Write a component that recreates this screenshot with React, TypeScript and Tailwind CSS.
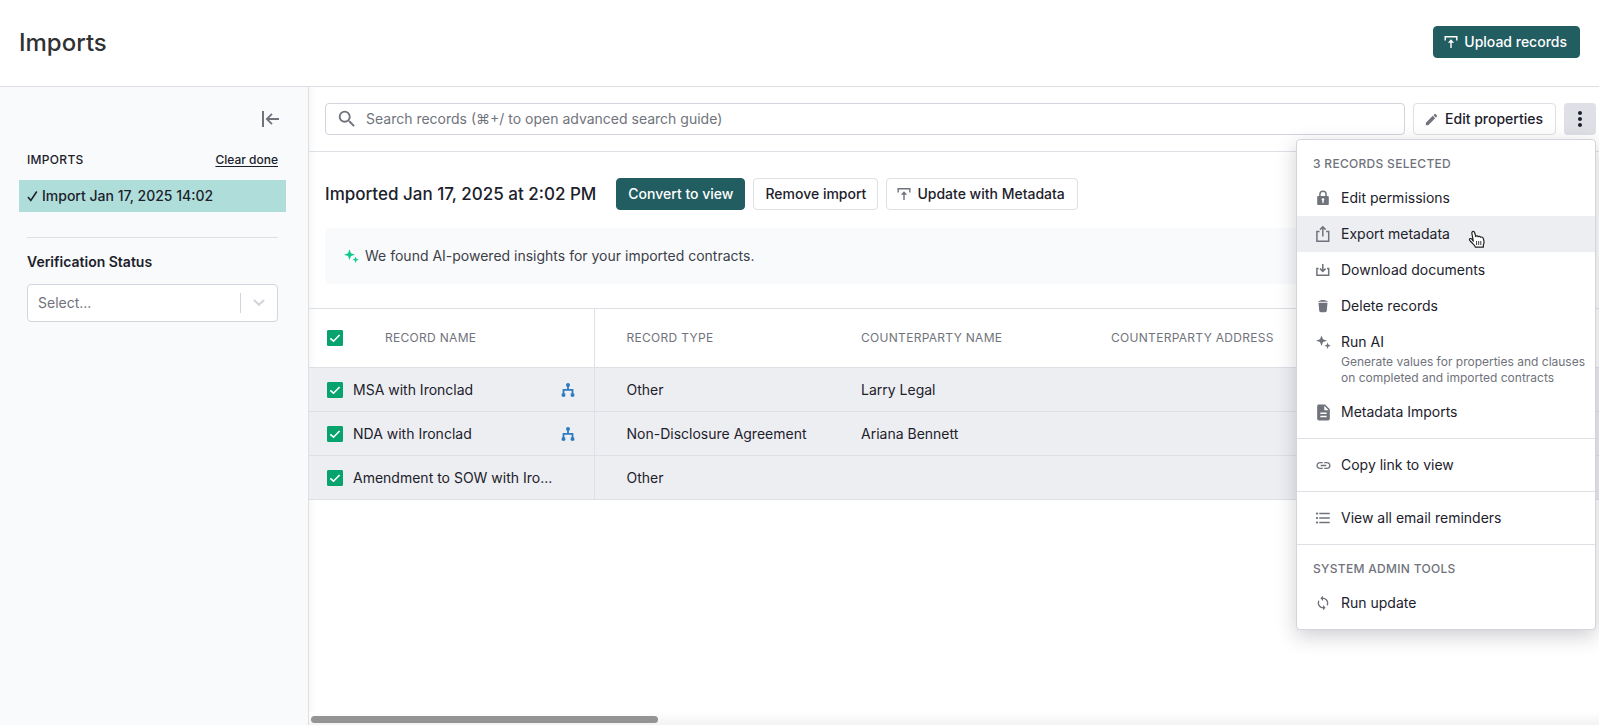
import { useState } from 'react'
import type { ReactNode } from 'react'
import clsx from 'clsx'
import { MdLink, MdEdit, MdSearch, MdDescription, MdMoreVert, MdFormatListBulleted } from 'react-icons/md'

type RecordRow = {
  name: string
  type: string
  counterparty: string
  related: boolean
}

const records: RecordRow[] = [
  { name: 'MSA with Ironclad', type: 'Other', counterparty: 'Larry Legal', related: true },
  { name: 'NDA with Ironclad', type: 'Non-Disclosure Agreement', counterparty: 'Ariana Bennett', related: true },
  { name: 'Amendment to SOW with Iro...', type: 'Other', counterparty: '', related: false },
]

function UploadIcon() {
  return (
    <svg width="14" height="14" viewBox="0 0 14 14" fill="none" stroke="currentColor" strokeWidth="1.4">
      <path d="M1.2 5.6V1.7h11.6v3.9M7 13V6" />
      <path d="M7 4.2 10.1 7.8H3.9z" fill="currentColor" stroke="none" />
    </svg>
  )
}

function ExportIcon() {
  return (
    <svg width="16" height="18" viewBox="0 0 16 18" fill="none" stroke="currentColor" strokeWidth="1.5">
      <path d="M4.5 6.6H1.9v9.7h11.8V6.6h-2.6M7.8 11.5V2M5 4.6l2.8-2.8 2.8 2.8" />
    </svg>
  )
}

function DownloadIcon() {
  return (
    <svg width="16" height="14" viewBox="0 0 16 14" fill="none" stroke="currentColor" strokeWidth="1.5">
      <path d="M3.6 5.6H1.9v6.7h11.8V5.6H12M7.8 1v7M5 5.6l2.8 2.8 2.8-2.8" />
    </svg>
  )
}

function LockIcon() {
  return (
    <svg width="14" height="16" viewBox="0 0 14 16">
      <path d="M3.9 6.5V4.3a3.1 3.1 0 0 1 6.2 0v2.2" fill="none" stroke="currentColor" strokeWidth="1.5" />
      <rect x="1.2" y="6" width="11.6" height="9" rx="1" fill="currentColor" />
      <circle cx="7" cy="9.5" r="1.3" fill="#fff" />
      <path d="M7 9.5V13" stroke="#fff" strokeWidth="1.3" />
    </svg>
  )
}

function TrashIcon() {
  return (
    <svg width="12" height="14" viewBox="0 0 12 14" fill="currentColor">
      <path d="M4 1.2C4.6.9 7.400.9 8 1.200l2 .7c.6.2.9.5.9.9H1.100c0-.4.300-.7.900-.9zM1.500 3.800h9l-.7 7.700c-.1 1-.8 1.700-1.800 1.700H4c-1 0-1.700-.7-1.800-1.700z" />
    </svg>
  )
}

function SparkleIcon() {
  return (
    <svg width="15" height="15" viewBox="0 0 15 15" fill="currentColor">
      <path d="M5.5.5 7 4.3l4 1.4-4 1.4-1.5 4-1.5-4-4-1.4 4-1.4zM11.600 7.600l.9 2.200 2.300.9-2.300.9-.9 2.300-.9-2.300-2.300-.9 2.300-.9z" />
    </svg>
  )
}

function SyncIcon() {
  return (
    <svg width="16" height="16" viewBox="0 0 24 24" fill="currentColor">
      <path d="M12 4V1L8 5l4 4V6c3.31 0 6 2.69 6 6 0 1.01-.25 1.97-.7 2.8l1.46 1.46C19.54 15.03 20 13.57 20 12c0-4.42-3.58-8-8-8zm0 14c-3.31 0-6-2.69-6-6 0-1.01.25-1.97.7-2.8L5.24 7.74C4.46 8.97 4 10.43 4 12c0 4.42 3.58 8 8 8v3l4-4-4-4v3z" />
    </svg>
  )
}

function CollapseIcon() {
  return (
    <svg width="18" height="16" viewBox="0 0 18 16" fill="none" stroke="currentColor">
      <path d="M2 0v16" strokeWidth="2" />
      <path d="M18 8H6M11 2.8 5.8 8l5.2 5.2" strokeWidth="1.8" />
    </svg>
  )
}

function RelatedIcon() {
  return (
    <svg width="14" height="14" viewBox="0 0 14 14" fill="#2f7bbf">
      <circle cx="7" cy="2" r="2" />
      <circle cx="2.5" cy="12" r="2" />
      <circle cx="11.5" cy="12" r="2" />
      <path d="M7 2v4.5M2.5 12V6.8h9V12" fill="none" stroke="#2f7bbf" strokeWidth="1.8" />
    </svg>
  )
}

function HandCursor() {
  return (
    <svg width="18" height="19" viewBox="0 0 18 19" className="pointer-events-none absolute left-[171px] top-[14px]">
      <path
        d="M5.3 11.2 4 4.2C3.6 2.7 4 1.4 5 1.3c1-.1 1.5.6 1.8 1.7L7.7 6.5c.7-.9 2.1-.8 2.5.2.8-.7 2-.5 2.4.5 1.2-.5 2.4.1 2.7 1.3l.7 2.8c.3 1.6-.5 2.6-.6 3.8v2H7.3c-.3-1.7-2.1-2.8-3.4-4.4C2.8 11.3 1 10.400 1.400 9.200c.5-1.200 1.900-.7 2.600.2z"
        fill="#fff"
        stroke="#222"
        strokeWidth="1.2"
        strokeLinejoin="round"
      />
      <path d="M8.6 11v4M10.7 11v4M12.8 11v4" stroke="#222" strokeWidth=".9" />
    </svg>
  )
}

function Checkbox({ label, checked, onChange }: { label: string; checked: boolean; onChange: () => void }) {
  return (
    <span className="grid size-4 shrink-0">
      <input
        type="checkbox"
        aria-label={label}
        checked={checked}
        onChange={onChange}
        className="col-start-1 row-start-1 size-4 appearance-none rounded-[1px] border border-[#c9cbd3] bg-white checked:border-[#06a46c] checked:bg-[#06a46c]"
      />
      {checked && (
        <svg viewBox="0 0 16 16" fill="none" className="pointer-events-none col-start-1 row-start-1 size-4">
          <path d="M3.3 8.3 6.5 11.2 12.6 5" stroke="#fff" strokeWidth="1.6" />
        </svg>
      )}
    </span>
  )
}

function Button({ primary, icon, children }: { primary?: boolean; icon?: ReactNode; children: ReactNode }) {
  return (
    <button
      type="button"
      className={clsx(
        'flex h-8 shrink-0 items-center gap-1.5 whitespace-nowrap rounded border text-sm font-medium cursor-pointer',
        icon ? 'pl-2.5 pr-3' : 'px-[11px]',
        primary ? 'border-[#225d62] bg-[#225d62] text-white' : 'border-[#dfe0e6] bg-white text-[#1c212b]'
      )}
    >
      {icon && <span className={primary ? 'text-white' : 'text-[#70737c]'}>{icon}</span>}
      {children}
    </button>
  )
}

function MenuItem({ icon, label, note, active }: { icon: ReactNode; label: string; note?: string; active?: boolean }) {
  return (
    <button
      type="button"
      role="menuitem"
      className={clsx('relative flex w-full gap-2 py-2 pl-4 pr-1 text-left cursor-pointer', active && 'bg-[#edeef2]')}
    >
      <span className="flex h-5 w-5 shrink-0 items-center justify-center text-[#70737c]">{icon}</span>
      <span className="flex flex-col gap-0.5">
        <span className="text-sm text-[#1c212b]">{label}</span>
        {note && <span className="text-xs text-[#70737c]">{note}</span>}
      </span>
      {active && <HandCursor />}
    </button>
  )
}

function MenuHeading({ children }: { children: ReactNode }) {
  return (
    <div className="px-4 py-2 text-xs font-medium uppercase tracking-wide text-[#70737c]">{children}</div>
  )
}

function ActionsMenu() {
  return (
    <div
      role="menu"
      className="absolute right-0 top-9 z-10 w-[300px] divide-y divide-[#dfe0e6] rounded border border-[#d3d5dc] bg-white shadow-[0_6px_20px_rgba(30,34,50,0.22)]"
    >
      <div className="py-2">
        <MenuHeading>3 records selected</MenuHeading>
        <MenuItem icon={<LockIcon />} label="Edit permissions" />
        <MenuItem icon={<ExportIcon />} label="Export metadata" active />
        <MenuItem icon={<DownloadIcon />} label="Download documents" />
        <MenuItem icon={<TrashIcon />} label="Delete records" />
        <MenuItem
          icon={<SparkleIcon />}
          label="Run AI"
          note="Generate values for properties and clauses on completed and imported contracts"
        />
        <MenuItem icon={<MdDescription size={19} />} label="Metadata Imports" />
      </div>
      <div className="py-2">
        <MenuItem icon={<MdLink size={17} />} label="Copy link to view" />
      </div>
      <div className="py-2">
        <MenuItem icon={<MdFormatListBulleted size={18} />} label="View all email reminders" />
      </div>
      <div className="py-2">
        <MenuHeading>System admin tools</MenuHeading>
        <MenuItem icon={<SyncIcon />} label="Run update" />
      </div>
    </div>
  )
}

function Sidebar() {
  return (
    <aside className="w-[309px] shrink-0 border-r border-[#dfe0e6] bg-[#f9fafc] pl-[19px] pr-[22px] pt-4">
      <div className="flex h-8 items-center justify-end pr-[7px]">
        <button type="button" aria-label="Collapse sidebar" className="text-[#70737c] cursor-pointer">
          <CollapseIcon />
        </button>
      </div>
      <div className="mt-[17px] flex items-center justify-between px-2 text-xs font-medium">
        <h2 className="uppercase tracking-wide">Imports</h2>
        <a href="#clear" className="underline underline-offset-2">
          Clear done
        </a>
      </div>
      <a href="#import" className="mt-3 flex h-8 items-center gap-1 bg-[#afdeda] px-2 text-sm font-medium">
        <svg width="11" height="12" viewBox="0 0 11 12" fill="none" stroke="currentColor" strokeWidth="1.6">
          <path d="M1 7 3.8 10.5 9.8 1.5" />
        </svg>
        Import Jan 17, 2025 14:02
      </a>
      <div className="mx-2 mt-[25px] border-t border-[#dfe0e6] pt-3.5">
        <label htmlFor="status" className="block text-sm font-semibold">
          Verification Status
        </label>
        <div className="mt-3 flex h-[38px] items-center rounded border border-[#d3d5dc] bg-white">
          <select id="status" className="h-full flex-1 appearance-none px-2.5 text-sm text-[#70737c] outline-none">
            <option>Select...</option>
          </select>
          <span className="h-5 w-px bg-[#d3d5dc]" />
          <svg width="12" height="8" viewBox="0 0 12 8" fill="none" className="mx-3">
            <path d="M1.5 1.5 6 5.8l4.5-4.3" stroke="#d3d5dc" strokeWidth="2.2" strokeLinecap="round" />
          </svg>
        </div>
      </div>
    </aside>
  )
}

function RecordsTable() {
  const [selected, setSelected] = useState<boolean[]>(records.map(() => true))
  const all = selected.every(Boolean)

  const headCell = 'pl-8 text-left text-xs font-normal uppercase tracking-wide text-[#70737c]'
  const cell = 'truncate pl-8'

  return (
    <table className="w-full table-fixed border-y border-[#dfe0e6] text-sm">
      <colgroup>
        <col className="w-[285px]" />
        <col className="w-[235px]" />
        <col className="w-[250px]" />
        <col />
      </colgroup>
      <thead>
        <tr className="h-[59px]">
          <th className="border-r border-[#dfe0e6] pl-[18px] text-left text-xs font-normal uppercase tracking-wide text-[#70737c]">
            <div className="flex items-center gap-[42px]">
              <Checkbox label="Select all records" checked={all} onChange={() => setSelected(records.map(() => !all))} />
              Record name
            </div>
          </th>
          <th className={headCell}>Record type</th>
          <th className={headCell}>Counterparty name</th>
          <th className={headCell}>Counterparty address</th>
        </tr>
      </thead>
      <tbody>
        {records.map((record, i) => (
          <tr key={record.name} className={clsx('h-11 border-t border-[#dfe0e6]', selected[i] && 'bg-[#edeef2]')}>
            <td className="border-r border-[#dfe0e6] pl-[18px] pr-[19px]">
              <div className="flex items-center">
                <Checkbox
                  label={`Select ${record.name}`}
                  checked={selected[i]}
                  onChange={() => setSelected(selected.map((s, j) => (j === i ? !s : s)))}
                />
                <span className="ml-2.5 whitespace-nowrap">{record.name}</span>
                {record.related && (
                  <span className="ml-auto">
                    <RelatedIcon />
                  </span>
                )}
              </div>
            </td>
            <td className={cell}>{record.type}</td>
            <td className={cell}>{record.counterparty}</td>
            <td className={cell} />
          </tr>
        ))}
      </tbody>
    </table>
  )
}

export default function App() {
  return (
    <div className="flex min-h-screen flex-col bg-white font-['Inter',sans-serif] text-[#1c212b]">
      <header className="flex h-[87px] items-center justify-between border-b border-[#dfe0e6] px-[19px] pb-0.5">
        <h1 className="pt-0.5 text-2xl font-medium text-[#2f3133]">Imports</h1>
        <Button primary icon={<UploadIcon />}>
          Upload records
        </Button>
      </header>

      <div className="flex flex-1">
        <Sidebar />

        <main className="flex min-w-0 flex-1 flex-col shadow-[inset_6px_0_6px_-4px_rgba(30,34,50,0.05)]">
          <div className="flex gap-2 border-b border-[#dfe0e6] py-4 pl-4 pr-[3px]">
            <label className="flex h-8 flex-1 items-center rounded border border-[#d3d5dc] bg-white pl-2.5">
              <MdSearch size={22} className="text-[#70737c]" />
              <input
                type="text"
                aria-label="Search records"
                placeholder="Search records (⌘+/ to open advanced search guide)"
                className="ml-2 flex-1 text-sm outline-none placeholder:text-[#70737c]"
              />
            </label>
            <Button icon={<MdEdit size={15} />}>Edit properties</Button>
            <div className="relative">
              <button
                type="button"
                aria-label="More actions"
                className="flex size-8 items-center justify-center rounded bg-[#dfe0e6] cursor-pointer"
              >
                <MdMoreVert size={24} />
              </button>
              <ActionsMenu />
            </div>
          </div>

          <div className="flex items-center gap-2 pl-4 pt-[26px]">
            <h2 className="mr-3 pt-0.5 text-[17px] font-medium">Imported Jan 17, 2025 at 2:02 PM</h2>
            <Button primary>Convert to view</Button>
            <Button>Remove import</Button>
            <Button icon={<UploadIcon />}>Update with Metadata</Button>
          </div>

          <div className="mb-6 ml-4 mr-4 mt-[18px] flex h-14 items-center gap-1.5 rounded bg-[#f9fafc] pl-[19px] text-sm text-[#3c3f48]">
            <span className="text-[#10cb8b]">
              <SparkleIcon />
            </span>
            We found AI-powered insights for your imported contracts.
          </div>

          <RecordsTable />

          <div className="mt-auto bg-linear-to-b from-white to-[#f3f3f3] px-0.5 pb-0.5 pt-1">
            <div className="h-[7px] w-[27%] rounded-full bg-[#949494]" />
          </div>
        </main>
      </div>
    </div>
  )
}
